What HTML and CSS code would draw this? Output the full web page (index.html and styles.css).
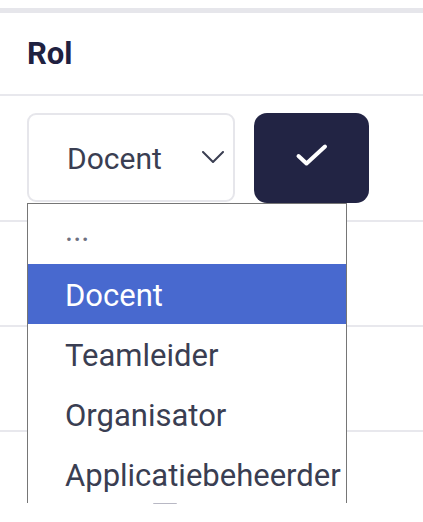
FILE: index.html
```html
<!DOCTYPE html>
<html>
<head>
<meta charset="utf-8">
<link rel="stylesheet" href="styles.css">
</head>
<body>
<div class="topbar"></div>
<div class="row header"><span class="title">Rol</span></div>
<div class="row row1">
  <div class="controls">
    <div class="select-wrap">
      <div class="select">
        <span class="value">Docent</span>
        <svg class="chev" width="22" height="12" viewBox="0 0 22 12"><path d="M1 1 L11 11 L21 1" fill="none" stroke="#3b3f52" stroke-width="2" stroke-linecap="round" stroke-linejoin="round"/></svg>
      </div>
      <ul class="dropdown">
        <li class="opt muted">...</li>
        <li class="opt active">Docent</li>
        <li class="opt">Teamleider</li>
        <li class="opt">Organisator</li>
        <li class="opt">Applicatiebeheerder</li>
      </ul>
    </div>
    <button class="ok" type="button">
      <svg width="34" height="24" viewBox="0 0 34 24"><path d="M3.5 13 L11.5 20.5 L30 3.5" fill="none" stroke="#ffffff" stroke-width="4" stroke-linecap="round" stroke-linejoin="round"/></svg>
    </button>
  </div>
</div>
<div class="row row2"></div>
<div class="row row3"></div>
<div class="row row4"><div class="peek"></div></div>
</body>
</html>
```
FILE: styles.css
```css
* { box-sizing: border-box; }
html, body { margin: 0; padding: 0; background: #ffffff; }
body {
  width: 423px;
  height: 522px;
  overflow: hidden;
  font-family: Roboto, "Liberation Sans", sans-serif;
  padding-top: 8px;
}
.topbar { height: 5px; background: #e6e6eb; }
.row { border-bottom: 2px solid #e8e8ed; }
.header {
  height: 83px;
  padding-left: 27px;
  display: flex;
  align-items: center;
}
.title {
  font-weight: 700;
  font-size: 31px;
  color: #1f2140;
  margin-top: -1px;
}
.row1 { height: 126px; padding-top: 17px; }
.controls { display: flex; gap: 19px; padding-left: 27px; }
.select-wrap { position: relative; }
.select {
  width: 208px;
  height: 89px;
  border: 2px solid #e6e6eb;
  border-radius: 9px;
  display: flex;
  align-items: center;
  justify-content: space-between;
  padding: 0 9px 0 38px;
  background: #fff;
}
.value { font-size: 30px; color: #3a3e52; margin-top: 2px; }
.chev { margin-top: -2px; }
.ok {
  width: 115px;
  height: 90px;
  border: none;
  border-radius: 13px;
  background: #222444;
  display: flex;
  align-items: center;
  justify-content: center;
  padding: 0;
}
.ok svg { margin-top: -6px; }
.dropdown {
  position: absolute;
  top: 90px;
  left: 0;
  width: 320px;
  height: 300px;
  margin: 0;
  padding: 0;
  list-style: none;
  background: #fff;
  border: 1px solid #767676;
  border-bottom: none;
  z-index: 5;
}
.opt {
  height: 60px;
  padding-left: 37px;
  padding-top: 3px;
  line-height: 57px;
  font-size: 31px;
  color: #3a3e52;
  white-space: nowrap;
}
.opt.muted { color: #6e7080; padding-top: 0; line-height: 54px; }
.opt.active { background: #4869cf; color: #ffffff; }
.row2 { height: 105px; }
.row3 { height: 105px; }
.row4 { height: 90px; border-bottom: none; padding: 70px 0 0 153px; }
.peek { width: 24px; height: 2px; border-radius: 1px; background: #b8b8c4; }
```
